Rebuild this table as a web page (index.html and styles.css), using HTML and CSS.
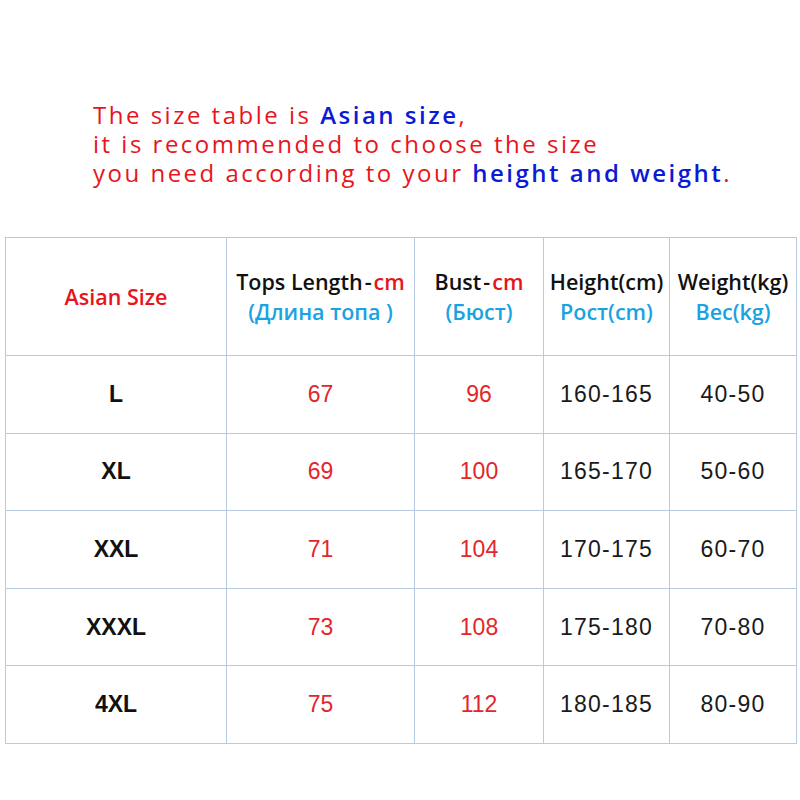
FILE: index.html
```html
<!DOCTYPE html>
<html>
<head>
<meta charset="utf-8">
<link rel="stylesheet" href="styles.css">
</head>
<body>
<div class="page">
  <div class="intro">
    <p class="line red">The size table is <span class="blue">Asian size</span>,</p>
    <p class="line red">it is recommended to choose the size</p>
    <p class="line red">you need according to your <span class="blue">height and weight</span>.</p>
  </div>
  <table class="sizes">
    <colgroup>
      <col class="c1"><col class="c2"><col class="c3"><col class="c4"><col class="c5">
    </colgroup>
    <tr class="head">
      <th><span class="hred big">Asian Size</span></th>
      <th><div class="h1">Tops Length<span class="dash">-</span><span class="hred">cm</span></div><div class="h2">(Длина топа )</div></th>
      <th><div class="h1">Bust<span class="dash">-</span><span class="hred">cm</span></div><div class="h2">(Бюст)</div></th>
      <th><div class="h1">Height(cm)</div><div class="h2">Рост(cm)</div></th>
      <th><div class="h1">Weight(kg)</div><div class="h2">Вес(kg)</div></th>
    </tr>
    <tr><td class="sz">L</td><td class="num">67</td><td class="num">96</td><td class="rng">160-165</td><td class="rng">40-50</td></tr>
    <tr><td class="sz">XL</td><td class="num">69</td><td class="num">100</td><td class="rng">165-170</td><td class="rng">50-60</td></tr>
    <tr><td class="sz">XXL</td><td class="num">71</td><td class="num">104</td><td class="rng">170-175</td><td class="rng">60-70</td></tr>
    <tr><td class="sz">XXXL</td><td class="num">73</td><td class="num">108</td><td class="rng">175-180</td><td class="rng">70-80</td></tr>
    <tr><td class="sz">4XL</td><td class="num">75</td><td class="num">112</td><td class="rng">180-185</td><td class="rng">80-90</td></tr>
  </table>
</div>
</body>
</html>
```

FILE: styles.css
```css
html, body {
  margin: 0;
  padding: 0;
  background: #ffffff;
}
.page {
  width: 800px;
  height: 800px;
  padding-top: 100px;
  box-sizing: border-box;
}
.intro {
  padding-left: 93px;
  height: 137px;
  box-sizing: border-box;
}
.line {
  margin: 0;
  font-family: "Open Sans", "Noto Sans", sans-serif;
  font-size: 24px;
  line-height: 29px;
  letter-spacing: 2.5px;
  white-space: nowrap;
}
.red { color: #e8141c; }
.blue { color: #0b1ad6; font-weight: 600; }
.sizes {
  margin-left: 5px;
  width: 791px;
  border-collapse: collapse;
  table-layout: fixed;
  font-family: "Liberation Sans", Arial, sans-serif;
}
.c1 { width: 221px; }
.c2 { width: 188px; }
.c3 { width: 129px; }
.c4 { width: 126px; }
.c5 { width: 127px; }
.sizes th, .sizes td {
  border: 1px solid #b7cbe0;
  text-align: center;
  vertical-align: middle;
  padding: 0;
}
.head th {
  height: 117px;
  font-family: "Open Sans", "Noto Sans", sans-serif;
  font-weight: 600;
  font-size: 21.5px;
  color: #111;
}
.hred { color: #e8141c; }
.big { font-size: 21.5px; }
.dash { padding: 0 2px; }
.h1 { line-height: 30px; white-space: nowrap; }
.h2 { color: #1aa3e0; line-height: 30px; white-space: nowrap; }
.sizes td {
  height: 76.6px;
  font-size: 23px;
}
.sz { font-weight: bold; color: #111; font-size: 22px; }
.num { color: #e3262b; }
.rng { color: #1a1a1a; letter-spacing: 1.2px; }
```
